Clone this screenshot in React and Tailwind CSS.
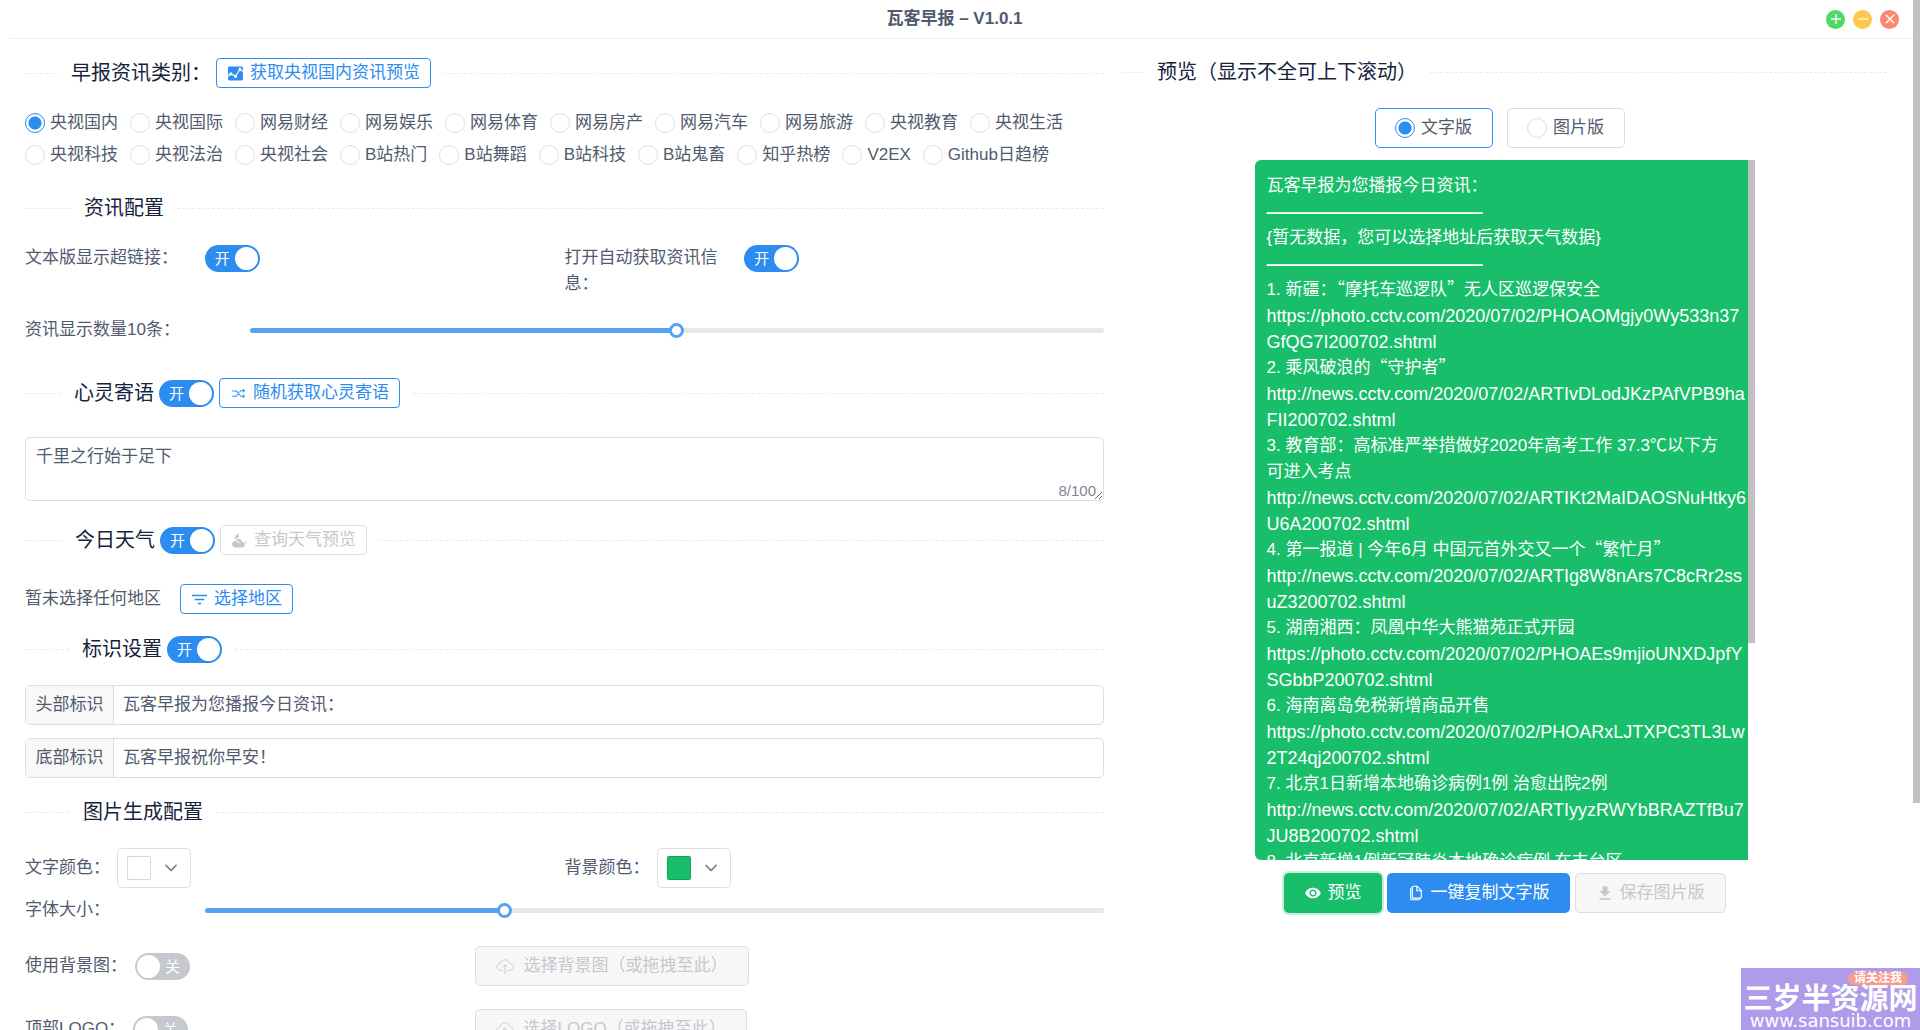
import { useState } from 'react'
import {
  IoIosArrowDown,
  IoIosShuffle,
  IoMdAdd,
  IoMdAnalytics,
  IoMdClose,
  IoMdCloudyNight,
  IoMdCopy,
  IoMdDownload,
  IoMdEye,
  IoMdFunnel,
  IoMdRemove,
} from 'react-icons/io'

const SOURCES = [
  ['央视国内', '央视国际', '网易财经', '网易娱乐', '网易体育', '网易房产', '网易汽车', '网易旅游', '央视教育', '央视生活'],
  ['央视科技', '央视法治', '央视社会', 'B站热门', 'B站舞蹈', 'B站科技', 'B站鬼畜', '知乎热榜', 'V2EX', 'Github日趋榜'],
]

const NEWS = [
  { title: '新疆：“摩托车巡逻队”无人区巡逻保安全', url: 'https://photo.cctv.com/2020/07/02/PHOAOMgjy0Wy533n37GfQG7I200702.shtml' },
  { title: '乘风破浪的“守护者”', url: 'http://news.cctv.com/2020/07/02/ARTIvDLodJKzPAfVPB9haFII200702.shtml' },
  { title: '教育部：高标准严举措做好2020年高考工作 37.3℃以下方可进入考点', url: 'http://news.cctv.com/2020/07/02/ARTIKt2MaIDAOSNuHtky6U6A200702.shtml' },
  { title: '第一报道 | 今年6月 中国元首外交又一个“繁忙月”', url: 'http://news.cctv.com/2020/07/02/ARTIg8W8nArs7C8cRr2ssuZ3200702.shtml' },
  { title: '湖南湘西：凤凰中华大熊猫苑正式开园', url: 'https://photo.cctv.com/2020/07/02/PHOAEs9mjioUNXDJpfYSGbbP200702.shtml' },
  { title: '海南离岛免税新增商品开售', url: 'https://photo.cctv.com/2020/07/02/PHOARxLJTXPC3TL3Lw2T24qj200702.shtml' },
  { title: '北京1日新增本地确诊病例1例 治愈出院2例', url: 'http://news.cctv.com/2020/07/02/ARTIyyzRWYbBRAZTfBu7JU8B200702.shtml' },
  { title: '北京新增1例新冠肺炎本地确诊病例 在丰台区', url: 'http://news.cctv.com/2020/07/02/ARTI200702.shtml' },
]

const RADIO =
  'size-5 shrink-0 appearance-none rounded-full border border-[#dcdee2] bg-white checked:border-[#2d8cf0] checked:bg-[radial-gradient(circle,#2d8cf0_0_6px,transparent_7px)]'

const BUTTON_STYLES = {
  outline: 'border-[#2d8cf0] bg-white text-[#2d8cf0]',
  ghost: 'border-[#dcdee2] bg-white text-[#c5c8ce]',
}

function Divider({ lead, className = '', children }) {
  return (
    <div className={`flex items-center text-[20px] text-[#17233d] ${className}`}>
      <span className={`shrink-0 border-t border-dashed border-[#e8eaec] ${lead}`} />
      <div className="flex shrink-0 items-center gap-[5px] px-[13px]">{children}</div>
      <span className="flex-1 border-t border-dashed border-[#e8eaec]" />
    </div>
  )
}

function Switch({ label, defaultOn = false }) {
  const [on, setOn] = useState(defaultOn)
  return (
    <button
      type="button"
      role="switch"
      aria-checked={on}
      aria-label={label}
      onClick={() => setOn(!on)}
      className={`flex h-[27px] w-[55px] shrink-0 items-center justify-between rounded-full text-[15px] leading-none text-white ${
        on ? 'bg-[#2d8cf0] pr-0.5 pl-2.5' : 'flex-row-reverse bg-[#c5c8ce] pr-2.5 pl-0.5'
      }`}
    >
      <span>{on ? '开' : '关'}</span>
      <span className="size-[23px] rounded-full bg-white" />
    </button>
  )
}

function SmallButton({ icon: Icon, kind = 'outline', disabled, children }) {
  return (
    <button
      type="button"
      disabled={disabled}
      className={`flex h-[30px] items-center gap-1.5 rounded-[4px] border px-2.5 text-[17px] ${BUTTON_STYLES[kind]}`}
    >
      <Icon className="size-[17px]" />
      {children}
    </button>
  )
}

function Slider({ id, initial }) {
  const [value, setValue] = useState(initial)
  return (
    <input
      id={id}
      type="range"
      value={value}
      onChange={e => setValue(Number(e.target.value))}
      className="h-[5px] min-w-0 flex-1 appearance-none rounded-full [&::-webkit-slider-thumb]:size-[15px] [&::-webkit-slider-thumb]:appearance-none [&::-webkit-slider-thumb]:rounded-full [&::-webkit-slider-thumb]:border-3 [&::-webkit-slider-thumb]:border-[#57a3f3] [&::-webkit-slider-thumb]:bg-white"
      style={{ background: `linear-gradient(to right, #57a3f3 ${value}%, #e8e8e8 ${value}%)` }}
    />
  )
}

function ColorPicker({ label, swatch }) {
  return (
    <button
      type="button"
      aria-label={label}
      className="flex h-10 w-[74px] items-center justify-between rounded-[5px] border border-[#dcdee2] bg-white pr-2.5 pl-[9px]"
    >
      <span className={`size-6 rounded-[2px] border border-black/15 ${swatch}`} />
      <IoIosArrowDown className="size-[18px] text-[#808695]" />
    </button>
  )
}

function TaggedInput({ id, tag, value }) {
  return (
    <div className="flex h-10 overflow-hidden rounded-[5px] border border-[#dcdee2]">
      <label htmlFor={id} className="flex w-[88px] items-center justify-center border-r border-[#dcdee2] bg-[#f8f8f9]">
        {tag}
      </label>
      <input id={id} type="text" defaultValue={value} className="min-w-0 flex-1 px-[9px] outline-none" />
    </div>
  )
}

function UploadIcon() {
  return (
    <svg viewBox="0 0 512 512" className="size-[18px]" fill="none" stroke="currentColor" strokeWidth="24" strokeLinecap="round" strokeLinejoin="round">
      <path d="M184 376h-66C66 376 24 343 24 286c0-53 43-85 86-88 9-76 71-118 142-118 74 0 122 49 136 107 55 4 100 38 100 94 0 58-46 95-104 95h-56" />
      <path d="M256 470V226M190 288l66-66 66 66" />
    </svg>
  )
}

function UploadButton({ children }) {
  return (
    <button
      type="button"
      disabled
      className="flex h-10 items-center gap-2.5 rounded-[5px] border border-[#dcdee2] bg-[#f7f7f7] px-5 text-[#c5c8ce]"
    >
      <UploadIcon />
      {children}
    </button>
  )
}

// Curly quotes take a full square in Chinese text, so they need the CJK face
function CjkText({ children }) {
  return children.split(/([“”])/).map((part, i) => (
    <span key={i} className={part === '“' || part === '”' ? "font-['Noto_Sans_CJK_SC',sans-serif] leading-none" : undefined}>
      {part}
    </span>
  ))
}

function TitleBar() {
  return (
    <header className="ml-2.5 flex h-[39px] items-center border-b border-[#ececec]">
      <div className="flex-1" />
      <h1 className="text-[17px] font-bold">瓦客早报 – V1.0.1</h1>
      <div className="flex flex-1 justify-end gap-2 pr-3.5 text-white">
        <button type="button" aria-label="最大化" className="flex size-[19px] items-center justify-center rounded-full bg-[#4cd964]">
          <IoMdAdd className="size-4" />
        </button>
        <button type="button" aria-label="最小化" className="flex size-[19px] items-center justify-center rounded-full bg-[#fdc84b]">
          <IoMdRemove className="size-4" />
        </button>
        <button type="button" aria-label="关闭" className="flex size-[19px] items-center justify-center rounded-full bg-[#fc8672]">
          <IoMdClose className="size-4" />
        </button>
      </div>
    </header>
  )
}

function Settings() {
  const [source, setSource] = useState('央视国内')
  return (
    <section className="w-7/12 px-2.5">
      <Divider lead="w-[33px]" className="mt-[19px] h-[30px]">
        <span>早报资讯类别：</span>
        <SmallButton icon={IoMdAnalytics}>获取央视国内资讯预览</SmallButton>
      </Divider>

      <div className="mt-[19px]">
        {SOURCES.map(row => (
          <div key={row[0]} className="flex h-8 gap-3">
            {row.map(name => (
              <label key={name} className="flex items-center gap-[5px] whitespace-nowrap">
                <input type="radio" name="source" checked={source === name} onChange={() => setSource(name)} className={RADIO} />
                {name}
              </label>
            ))}
          </div>
        ))}
      </div>

      <Divider lead="w-[46px]" className="mt-[22px] h-[30px]">
        <span>资讯配置</span>
      </Divider>

      <div className="mt-[22px] flex">
        <div className="flex w-1/2 items-start">
          <span className="w-1/3 pr-5 leading-[26px]">文本版显示超链接：</span>
          <Switch label="文本版显示超链接" defaultOn />
        </div>
        <div className="flex w-1/2 items-start">
          <span className="w-1/3 pr-5 leading-[26px]">打开自动获取资讯信息：</span>
          <Switch label="打开自动获取资讯信息" defaultOn />
        </div>
      </div>

      <div className="mt-5 flex h-[26px] items-center">
        <label htmlFor="count" className="w-5/24">资讯显示数量10条：</label>
        <Slider id="count" initial={50} />
      </div>

      <Divider lead="w-9" className="mt-[35px] h-[30px]">
        <span>心灵寄语</span>
        <Switch label="心灵寄语" defaultOn />
        <SmallButton icon={IoIosShuffle}>随机获取心灵寄语</SmallButton>
      </Divider>

      <div className="relative mt-[29px]">
        <textarea
          aria-label="心灵寄语内容"
          defaultValue="千里之行始于足下"
          className="block h-16 w-full rounded-[5px] border border-[#dcdee2] px-2.5 py-1.5 leading-[26px] outline-none"
        />
        <span className="absolute right-2 bottom-0 text-[15px] leading-5 text-[#808695]">8/100</span>
      </div>

      <Divider lead="w-[37px]" className="mt-6 h-[30px]">
        <span>今日天气</span>
        <Switch label="今日天气" defaultOn />
        <SmallButton icon={IoMdCloudyNight} kind="ghost" disabled>查询天气预览</SmallButton>
      </Divider>

      <div className="mt-[29px] flex h-[30px] items-center gap-[19px]">
        <span>暂未选择任何地区</span>
        <SmallButton icon={IoMdFunnel}>选择地区</SmallButton>
      </div>

      <Divider lead="w-11" className="mt-5 h-[30px]">
        <span>标识设置</span>
        <Switch label="标识设置" defaultOn />
      </Divider>

      <div className="mt-[21px] flex flex-col gap-[13px]">
        <TaggedInput id="head-mark" tag="头部标识" value="瓦客早报为您播报今日资讯：" />
        <TaggedInput id="foot-mark" tag="底部标识" value="瓦客早报祝你早安！" />
      </div>

      <Divider lead="w-[45px]" className="mt-[19px] h-[30px]">
        <span>图片生成配置</span>
      </Divider>

      <div className="mt-[21px] flex">
        <div className="flex w-1/2 items-center gap-[7px]">
          <span>文字颜色：</span>
          <ColorPicker label="文字颜色" swatch="bg-white" />
        </div>
        <div className="flex w-1/2 items-center gap-[7px]">
          <span>背景颜色：</span>
          <ColorPicker label="背景颜色" swatch="bg-[#19be6b]" />
        </div>
      </div>

      <div className="mt-[9px] flex h-[26px] items-center">
        <label htmlFor="font-size" className="w-1/6">字体大小：</label>
        <Slider id="font-size" initial={33} />
      </div>

      <div className="mt-[23px] flex h-10 items-center">
        <div className="flex w-5/12 items-center gap-2">
          <span>使用背景图：</span>
          <Switch label="使用背景图" />
        </div>
        <UploadButton>选择背景图（或拖拽至此）</UploadButton>
      </div>
      <div className="mt-[23px] flex h-10 items-center">
        <div className="flex w-5/12 items-center gap-2">
          <span>顶部LOGO：</span>
          <Switch label="顶部LOGO" />
        </div>
        <UploadButton>选择LOGO（或拖拽至此）</UploadButton>
      </div>
    </section>
  )
}

function Preview() {
  const [mode, setMode] = useState('文字版')
  return (
    <section className="w-5/12 pr-3 pl-2">
      <Divider lead="w-[22px]" className="mt-[18px] h-[30px]">
        <span>预览（显示不全可上下滚动）</span>
      </Divider>

      <div className="mt-[21px] flex justify-center gap-3.5 pr-2.5">
        {['文字版', '图片版'].map(name => (
          <label
            key={name}
            className={`flex h-10 w-[118px] items-center justify-center gap-1.5 rounded-[5px] border ${
              mode === name ? 'border-[#2d8cf0]' : 'border-[#dcdee2]'
            }`}
          >
            <input type="radio" name="mode" checked={mode === name} onChange={() => setMode(name)} className={RADIO} />
            {name}
          </label>
        ))}
      </div>

      <div className="mx-auto mt-3 flex h-[700px] w-[500px]">
        <div className="flex-1 overflow-hidden rounded-l-[6px] bg-[#19be6b] py-[13px] pl-3 leading-[26px] text-white">
          <p>瓦客早报为您播报今日资讯：</p>
          <p className="text-[18px] font-bold">————————————</p>
          <p>{'{暂无数据，您可以选择地址后获取天气数据}'}</p>
          <p className="text-[18px] font-bold">————————————</p>
          {NEWS.map((item, i) => (
            <div key={item.url}>
              <p className="pr-4 break-all">
                {i + 1}. <CjkText>{item.title}</CjkText>
              </p>
              <p className="text-[18px] break-all">{item.url}</p>
            </div>
          ))}
        </div>
        <div className="w-[7px]">
          <div className="h-[69%] bg-[#c1c1c1]" />
        </div>
      </div>

      <div className="mt-[13px] flex justify-center gap-[5px]">
        <button type="button" className="flex h-10 items-center gap-1.5 rounded-[5px] bg-[#19be6b] px-5 text-white shadow-[0_0_0_2px_rgba(25,190,107,0.25)]">
          <IoMdEye className="size-[18px]" />
          预览
        </button>
        <button type="button" className="flex h-10 items-center gap-1.5 rounded-[5px] bg-[#2d8cf0] px-5 text-white">
          <IoMdCopy className="size-[18px]" />
          一键复制文字版
        </button>
        <button type="button" disabled className="flex h-10 items-center gap-1.5 rounded-[5px] border border-[#dcdee2] bg-[#f7f7f7] px-5 text-[#c5c8ce]">
          <IoMdDownload className="size-[18px]" />
          保存图片版
        </button>
      </div>
    </section>
  )
}

function Watermark() {
  return (
    <div className="fixed right-0 bottom-0 flex h-[62px] w-[179px] flex-col items-center overflow-hidden bg-[#ae9ceb] text-white">
      <span className="mt-1 mr-3 self-end rounded-full bg-[#f79c8c] px-1.5 text-[12px] leading-[13px] font-bold">请关注我</span>
      <span className="text-[29px] leading-[29px] font-bold whitespace-nowrap">三岁半资源网</span>
      <span className="font-['DejaVu_Sans',sans-serif] text-[18px] leading-[14px] whitespace-nowrap">www.sansuib.com</span>
    </div>
  )
}

export default function App() {
  return (
    <div className="flex h-screen overflow-hidden bg-white font-['Liberation_Sans','Noto_Sans_CJK_SC',sans-serif] text-[17px] text-[#515a6e]">
      <main className="min-w-0 flex-1">
        <TitleBar />
        <div className="flex pr-3.5 pl-[15px]">
          <Settings />
          <Preview />
        </div>
      </main>
      <div className="w-[7px]">
        <div className="h-[78%] bg-[#c1c1c1]" />
      </div>
      <Watermark />
    </div>
  )
}
